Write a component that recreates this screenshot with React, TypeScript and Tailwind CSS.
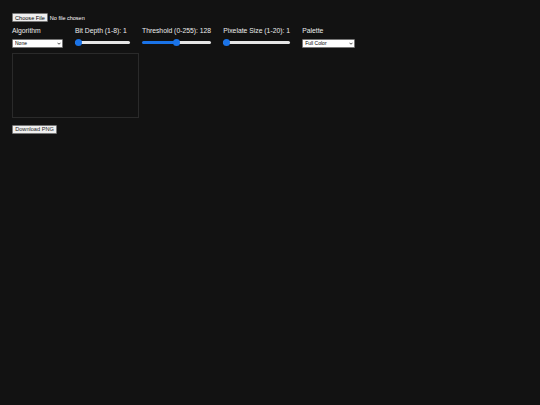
import { useState } from "react";

const Slider = ({
  value,
  min,
  max,
  width,
  onChange,
}: {
  value: number;
  min: number;
  max: number;
  width: string;
  onChange: (v: number) => void;
}) => {
  const pct = ((value - min) / (max - min)) * 100;
  return (
    <input
      type="range"
      min={min}
      max={max}
      value={value}
      onChange={(e) => onChange(Number(e.target.value))}
      className={`${width} h-[3px] appearance-none rounded-full cursor-pointer outline-none
        [&::-webkit-slider-thumb]:appearance-none [&::-webkit-slider-thumb]:w-[7px] [&::-webkit-slider-thumb]:h-[7px]
        [&::-webkit-slider-thumb]:rounded-full [&::-webkit-slider-thumb]:bg-[#1a73e8] [&::-webkit-slider-thumb]:border-0`}
      style={{
        background: `linear-gradient(to right, #1a73e8 0%, #1a73e8 ${pct}%, #e5e5e5 ${pct}%, #e5e5e5 100%)`,
      }}
    />
  );
};

const Select = ({
  value,
  options,
  width,
  onChange,
}: {
  value: string;
  options: string[];
  width: string;
  onChange: (v: string) => void;
}) => (
  <div className={`relative ${width}`}>
    <select
      value={value}
      onChange={(e) => onChange(e.target.value)}
      className="block w-full h-[9px] appearance-none text-[5px] leading-[7px] bg-white text-black border border-[#767676] rounded-[1px] pl-[2px] pr-[6px] py-0 outline-none"
    >
      {options.map((o) => (
        <option key={o}>{o}</option>
      ))}
    </select>
    <svg
      viewBox="0 0 8 5"
      className="absolute right-[2px] top-[3px] w-[4px] h-[3px] pointer-events-none"
    >
      <path d="M1 1 L4 4 L7 1" fill="none" stroke="#222" strokeWidth="1.6" />
    </svg>
  </div>
);

export default function App() {
  const [algorithm, setAlgorithm] = useState("None");
  const [bitDepth, setBitDepth] = useState(1);
  const [threshold, setThreshold] = useState(128);
  const [pixelSize, setPixelSize] = useState(1);
  const [palette, setPalette] = useState("Full Color");

  const label = "text-[6.8px] leading-[9px] text-[#ececec]";

  return (
    <div className="min-h-screen bg-[#121212] text-white px-[12px] pt-[14px] antialiased font-['Liberation_Sans',Arial,sans-serif]">
      <input
        type="file"
        accept="image/*"
        className="block h-[9px] -mt-[1px] text-[5.5px] leading-[9px] text-white
          file:h-[9px] file:px-[2px] file:py-0 file:mr-[2px] file:text-[5.6px] file:text-black
          file:bg-[#efefef] file:border file:border-solid file:border-[#767676] file:rounded-[1px]"
      />

      <div className="flex items-start gap-[12px] mt-[4px]">
        <div className="flex flex-col gap-[4px]">
          <label className={label}>Algorithm</label>
          <Select
            value={algorithm}
            options={["None", "Floyd-Steinberg", "Ordered", "Threshold"]}
            width="w-[51px]"
            onChange={setAlgorithm}
          />
        </div>

        <div className="flex flex-col gap-[6px]">
          <label className={label}>Bit Depth (1-8): {bitDepth}</label>
          <Slider value={bitDepth} min={1} max={8} width="w-[55px]" onChange={setBitDepth} />
        </div>

        <div className="flex flex-col gap-[6px]">
          <label className={label}>Threshold (0-255): {threshold}</label>
          <Slider value={threshold} min={0} max={255} width="w-[69px]" onChange={setThreshold} />
        </div>

        <div className="flex flex-col gap-[6px]">
          <label className={label}>Pixelate Size (1-20): {pixelSize}</label>
          <Slider value={pixelSize} min={1} max={20} width="w-[67px]" onChange={setPixelSize} />
        </div>

        <div className="flex flex-col gap-[4px]">
          <label className={label}>Palette</label>
          <Select
            value={palette}
            options={["Full Color", "Grayscale", "Game Boy", "CGA"]}
            width="w-[53px]"
            onChange={setPalette}
          />
        </div>
      </div>

      <div className="mt-[5px] w-[127px] h-[65px] border border-[#2a2a2a]" />

      <button className="block mt-[7px] h-[9px] w-[45px] text-[5.6px] leading-[7px] text-[#222] bg-[#efefef] border border-[#767676] rounded-[1px]">
        Download PNG
      </button>
    </div>
  );
}
